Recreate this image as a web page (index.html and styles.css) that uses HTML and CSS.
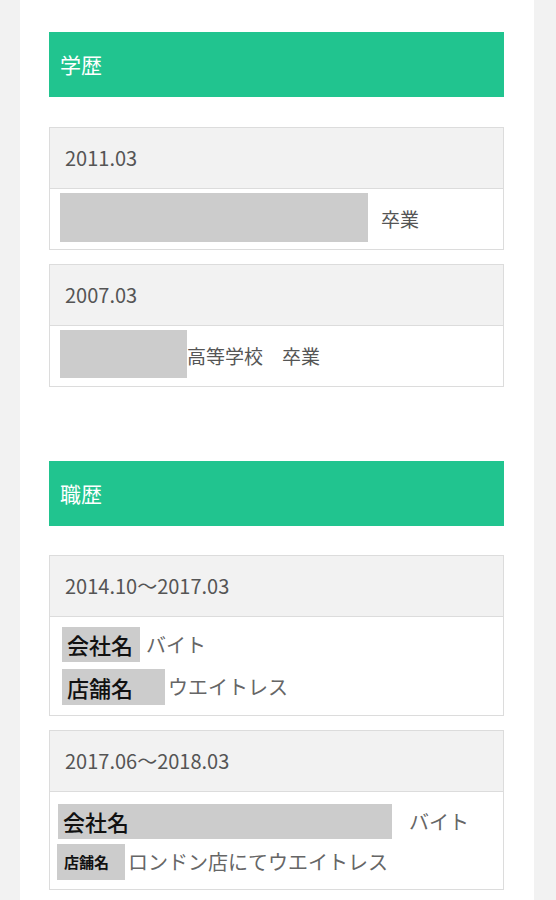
FILE: index.html
```html
<!DOCTYPE html>
<html lang="ja">
<head>
<meta charset="utf-8">
<title>学歴・職歴</title>
<link rel="stylesheet" href="styles.css">
</head>
<body>
<div class="page">
  <section class="sec sec-edu">
    <h2 class="sec-title">学歴</h2>
    <div class="card">
      <div class="card-head">2011.03</div>
      <div class="card-body edu-body">
        <span class="mask mask-wide"></span>
        <span class="edu-text edu-text-gap">卒業</span>
      </div>
    </div>
    <div class="card">
      <div class="card-head">2007.03</div>
      <div class="card-body edu-body">
        <span class="mask mask-short"></span>
        <span class="edu-text">高等学校　卒業</span>
      </div>
    </div>
  </section>

  <section class="sec sec-job">
    <h2 class="sec-title">職歴</h2>
    <div class="card">
      <div class="card-head">2014.10～2017.03</div>
      <div class="card-body job-body job-a">
        <div class="row">
          <span class="label label-a1">会社名</span>
          <span class="val val-a1">バイト</span>
        </div>
        <div class="row">
          <span class="label label-a2">店舗名</span>
          <span class="val val-a2">ウエイトレス</span>
        </div>
      </div>
    </div>
    <div class="card">
      <div class="card-head">2017.06～2018.03</div>
      <div class="card-body job-body job-b">
        <div class="row">
          <span class="label label-b1">会社名</span>
          <span class="val val-b1">バイト</span>
        </div>
        <div class="row">
          <span class="label label-b2">店舗名</span>
          <span class="val val-b2">ロンドン店にてウエイトレス</span>
        </div>
      </div>
    </div>
  </section>
</div>
</body>
</html>
```

FILE: styles.css
```css
* { box-sizing: border-box; }

html, body {
  margin: 0;
  padding: 0;
  background: #f2f2f2;
}

body {
  font-family: "Noto Sans CJK JP", "Noto Sans", sans-serif;
  color: #555;
}

.page {
  margin-left: 20px;
  width: 514px;
  min-height: 100vh;
  background: #fff;
  padding: 32px 30px 0 29px;
}

.sec {
  display: flex;
  flex-direction: column;
}

.sec-job {
  margin-top: 60px;
}

.sec-title {
  margin: 0 0 30px;
  height: 65px;
  background: #21c48f;
  color: #fff;
  font-size: 21px;
  font-weight: 400;
  line-height: 65px;
  padding-left: 11px;
}

.sec-job .sec-title {
  margin-bottom: 29px;
}

.card {
  border: 1px solid #dcdcdc;
  margin-bottom: 14px;
  background: #fff;
}

.card-head {
  height: 61px;
  background: #f2f2f2;
  border-bottom: 1px solid #dcdcdc;
  font-size: 20px;
  line-height: 60px;
  padding-left: 15px;
  color: #555;
}

.card-body {
  display: flex;
}

.edu-body {
  height: 60px;
  padding: 4px 10px 0;
  align-items: flex-start;
}

.mask {
  display: block;
  background: #cccccc;
}

.mask-wide {
  width: 308px;
  height: 49px;
}

.mask-short {
  width: 127px;
  height: 48px;
}

.edu-text {
  font-size: 19px;
  line-height: 52px;
  color: #555;
}

.edu-text-gap {
  margin-left: 13px;
}

.job-body {
  flex-direction: column;
}

.job-a {
  height: 98px;
  padding: 10px 12px 0;
  gap: 7px;
}

.job-b {
  height: 97px;
  padding: 12px 8px 0;
  gap: 5px;
}

.row {
  display: flex;
  align-items: center;
}

.label {
  display: block;
  background: #cccccc;
  color: #111;
  font-size: 22px;
  font-weight: 500;
  height: 35px;
  line-height: 35px;
  padding-left: 5px;
}

.label-a1 { width: 78px; }
.label-a2 { width: 103px; height: 36px; line-height: 36px; }
.label-b1 { width: 334px; }
.label-b2 {
  width: 68px;
  height: 36px;
  line-height: 36px;
  font-size: 15px;
  font-weight: 700;
  padding-left: 7px;
  margin-left: -1px;
}

.val {
  font-size: 20px;
  color: #666;
  line-height: 1;
}

.val-a1 { margin-left: 6px; }
.val-a2 { margin-left: 3px; }
.val-b1 { margin-left: 17px; }
.val-b2 { margin-left: 3px; }
```
